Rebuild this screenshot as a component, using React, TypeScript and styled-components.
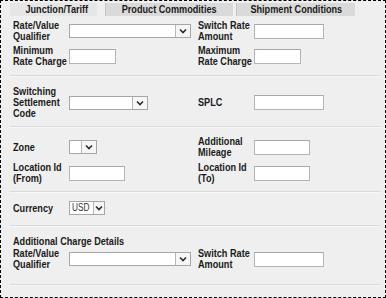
import React, { FC } from 'react';
import styled, { createGlobalStyle } from 'styled-components';

const Global = createGlobalStyle`
  html, body {
    margin: 0;
    padding: 0;
    background: #efefef;
  }
  body {
    font-family: "Liberation Sans", Arial, sans-serif;
  }
`;

const Frame = styled.div`
  width: 386px;
  height: 298px;
  box-sizing: border-box;
  border: 1px dashed #000;
  background: #efefef;
  padding: 2px 5px 0 9px;
  color: #1a1a1a;
  font-size: 11px;
  font-weight: bold;
`;

// the screenshot text is squeezed horizontally, like Arial Narrow
const Narrow = styled.span<{ origin?: string }>`
  display: inline-block;
  transform: scaleX(0.83);
  transform-origin: ${({ origin }) => origin ?? 'left'} center;
  white-space: nowrap;
`;

const TabBar = styled.div`
  display: flex;
  height: 13px;
`;

const Tab = styled.div<{ w: number; active?: boolean; gap?: number }>`
  width: ${({ w }) => w}px;
  margin-right: ${({ gap }) => gap ?? 0}px;
  background: ${({ active }) => (active ? '#e6e6e6' : '#dadada')};
  border-left: 1px solid ${({ active }) => (active ? '#e6e6e6' : '#c4c4c4')};
  box-sizing: border-box;
  display: flex;
  align-items: center;
  justify-content: center;
  line-height: 13px;
  padding-left: ${({ active }) => (active ? 6 : 0)}px;
`;

const Section = styled.div<{ pt: number; pb: number; gap?: number }>`
  display: grid;
  grid-template-columns: 56px 129px 56px 1fr;
  align-items: center;
  row-gap: ${({ gap }) => gap ?? 0}px;
  padding: ${({ pt }) => pt}px 0 ${({ pb }) => pb}px 3px;
  border-bottom: 1px solid #d9d9d9;
  box-shadow: 0 1px 0 #f7f7f7;
`;

const Label = styled.div<{ span?: boolean }>`
  line-height: 11px;
  white-space: nowrap;
  grid-column: ${({ span }) => (span ? '1 / -1' : 'auto')};
`;

const Cell = styled.div<{ h?: number }>`
  display: flex;
  align-items: center;
  height: ${({ h }) => (h ? `${h}px` : 'auto')};
`;

const Input = styled.div<{ w: number }>`
  width: ${({ w }) => w}px;
  height: 15px;
  box-sizing: border-box;
  background: #fff;
  border: 1px solid #b4b4b4;
  border-top-color: #a8a8a8;
`;

const SelectBox = styled.div<{ w: number }>`
  width: ${({ w }) => w}px;
  height: 14px;
  box-sizing: border-box;
  background: #fff;
  border: 1px solid #a6a6a6;
  display: flex;
`;

const SelectText = styled.div`
  flex: 1;
  font-weight: normal;
  font-size: 10px;
  line-height: 12px;
  padding-left: 2px;
  color: #333;
`;

const Arrow = styled.div`
  width: 14px;
  border-left: 1px solid #b8b8b8;
  display: flex;
  align-items: center;
  justify-content: center;
  background: #f6f6f6;
`;

const Select: FC<{ w: number; value?: string }> = ({ w, value }) => (
  <SelectBox w={w}>
    <SelectText>{value && <Narrow>{value}</Narrow>}</SelectText>
    <Arrow>
      <svg width="8" height="6" viewBox="0 0 8 6">
        <polyline points="1,1.5 4,4.5 7,1.5" fill="none" stroke="#2a2a2a" strokeWidth="1.6" />
      </svg>
    </Arrow>
  </SelectBox>
);

const Lines: FC<{ text: string[] }> = ({ text }) => (
  <>
    {text.map((t, i) => (
      <React.Fragment key={i}>
        <Narrow>{t}</Narrow>
        {i < text.length - 1 && <br />}
      </React.Fragment>
    ))}
  </>
);

const App: FC = () => (
  <>
    <Global />
    <Frame>
      <TabBar>
        <Tab w={87} gap={8} active><Narrow origin="center">Junction/Tariff</Narrow></Tab>
        <Tab w={128} gap={3}><Narrow origin="center">Product Commodities</Narrow></Tab>
        <Tab w={119}><Narrow origin="center">Shipment Conditions</Narrow></Tab>
      </TabBar>

      <Section pt={4} pb={8} gap={3}>
        <Label><Lines text={['Rate/Value', 'Qualifier']} /></Label>
        <Cell><Select w={122} /></Cell>
        <Label><Lines text={['Switch Rate', 'Amount']} /></Label>
        <Cell><Input w={70} /></Cell>
        <Label><Lines text={['Minimum', 'Rate Charge']} /></Label>
        <Cell><Input w={47} /></Cell>
        <Label><Lines text={['Maximum', 'Rate Charge']} /></Label>
        <Cell><Input w={47} /></Cell>
      </Section>

      <Section pt={10} pb={7}>
        <Label><Lines text={['Switching', 'Settlement', 'Code']} /></Label>
        <Cell><Select w={79} /></Cell>
        <Label><Lines text={['SPLC']} /></Label>
        <Cell><Input w={70} /></Cell>
      </Section>

      <Section pt={9} pb={7} gap={4}>
        <Label><Lines text={['Zone']} /></Label>
        <Cell><Select w={28} /></Cell>
        <Label><Lines text={['Additional', 'Mileage']} /></Label>
        <Cell><Input w={56} /></Cell>
        <Label><Lines text={['Location Id', '(From)']} /></Label>
        <Cell><Input w={56} /></Cell>
        <Label><Lines text={['Location Id', '(To)']} /></Label>
        <Cell><Input w={56} /></Cell>
      </Section>

      <Section pt={8} pb={9}>
        <Label><Lines text={['Currency']} /></Label>
        <Cell h={16}><Select w={36} value="USD" /></Cell>
      </Section>

      <Section pt={10} pb={14} gap={1}>
        <Label span><Lines text={['Additional Charge Details']} /></Label>
        <Label><Lines text={['Rate/Value', 'Qualifier']} /></Label>
        <Cell><Select w={122} /></Cell>
        <Label><Lines text={['Switch Rate', 'Amount']} /></Label>
        <Cell><Input w={70} /></Cell>
      </Section>
    </Frame>
  </>
);

export default App;
